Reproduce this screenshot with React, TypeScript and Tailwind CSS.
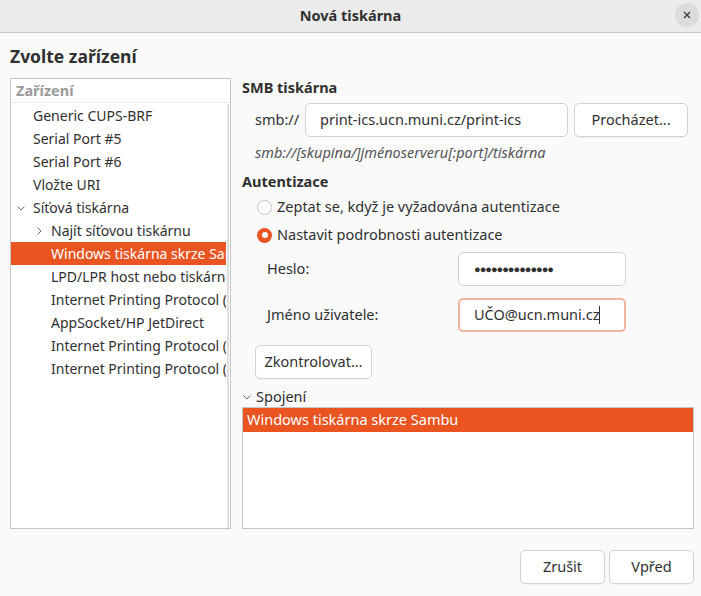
import React from "react";

const font = { fontFamily: '"Noto Sans", "Open Sans", sans-serif' };

const devices = [
  { label: "Generic CUPS-BRF", level: 1 },
  { label: "Serial Port #5", level: 1 },
  { label: "Serial Port #6", level: 1 },
  { label: "Vložte URI", level: 1 },
  { label: "Síťová tiskárna", level: 1, expander: "open" },
  { label: "Najít síťovou tiskárnu", level: 2, expander: "closed" },
  { label: "Windows tiskárna skrze Sambu", level: 2, selected: true },
  { label: "LPD/LPR host nebo tiskárna", level: 2 },
  { label: "Internet Printing Protocol (ipp)", level: 2 },
  { label: "AppSocket/HP JetDirect", level: 2 },
  { label: "Internet Printing Protocol (ipps)", level: 2 },
  { label: "Internet Printing Protocol (https)", level: 2 },
];

const Chevron = ({ open }: { open: boolean }) => (
  <svg width="10" height="10" viewBox="0 0 10 10" className="shrink-0">
    {open ? (
      <path d="M1.5 3.5 L5 7 L8.5 3.5" fill="none" stroke="#6b6b6b" strokeWidth="1" />
    ) : (
      <path d="M3.5 1.5 L7 5 L3.5 8.5" fill="none" stroke="#6b6b6b" strokeWidth="1" />
    )}
  </svg>
);

const Radio = ({ checked }: { checked: boolean }) =>
  checked ? (
    <span className="w-[15px] h-[15px] rounded-full bg-[#e95420] flex items-center justify-center shrink-0">
      <span className="w-[6px] h-[6px] rounded-full bg-white" />
    </span>
  ) : (
    <span className="w-[15px] h-[15px] rounded-full border border-[#c4c4c4] bg-white shrink-0" />
  );

const Button = ({ children, className = "" }: { children: React.ReactNode; className?: string }) => (
  <div
    className={`h-[34px] flex items-center justify-center rounded-[5px] border border-[#d2d2d2] bg-white text-[14.5px] text-[#303030] shadow-[0_1px_0_rgba(0,0,0,0.04)] ${className}`}
  >
    {children}
  </div>
);

export default function App() {
  return (
    <div style={font} className="w-[701px] h-[596px] bg-[#fafafa] text-[#303030] flex flex-col overflow-hidden">
      {/* header bar */}
      <div className="h-[33px] bg-[#ebebeb] border-b border-[#c6c6c6] flex items-center justify-center relative shrink-0">
        <span className="text-[14.5px] font-bold text-[#303030]">Nová tiskárna</span>
        <div className="absolute right-[2px] top-[3px] w-[24px] h-[24px] rounded-full bg-[#dcdcdc] flex items-center justify-center">
          <svg width="10" height="10" viewBox="0 0 10 10">
            <path d="M2 2 L8 8 M8 2 L2 8" stroke="#3a3a3a" strokeWidth="1.3" />
          </svg>
        </div>
      </div>

      <div className="pl-[10px] pr-[7px] flex flex-col flex-1">
        <div className="h-[45px] flex items-center pt-[1px] text-[17.5px] font-bold text-[#303030]">Zvolte zařízení</div>

        <div className="flex gap-[11px]">
          {/* device tree */}
          <div className="w-[221px] h-[451px] border border-[#c6c6c6] bg-white flex flex-col relative overflow-hidden">
            <div className="h-[24px] flex items-center pl-[5px] text-[14.5px] font-bold text-[#9a9a9a] border-b border-[#ececec]">
              Zařízení
            </div>
            <div className="flex flex-col pt-[1px] pr-[4px]">
              {devices.map((d, i) => (
                <div
                  key={i}
                  className={`h-[23px] flex items-center whitespace-nowrap overflow-hidden text-[14px] ${
                    d.selected ? "bg-[#e95420] text-white" : "text-[#303030]"
                  }`}
                >
                  <div
                    className={`shrink-0 flex items-center ${d.level === 1 ? "w-[22px] pl-[5px]" : "w-[40px] pl-[23px]"}`}
                  >
                    {d.expander && <Chevron open={d.expander === "open"} />}
                  </div>
                  <span className="shrink-0">{d.label}</span>
                </div>
              ))}
            </div>
            <div className="absolute right-[1px] top-[25px] bottom-0 w-[2px] bg-[#dedede]" />
          </div>

          {/* SMB settings */}
          <div className="flex-1 flex flex-col">
            <div className="h-[22px] flex items-center text-[14.5px] font-bold mt-[-1px]">SMB tiskárna</div>
            <div className="flex items-center mt-[4px] pl-[13px]">
              <span className="text-[14.5px] w-[50px]">smb://</span>
              <div className="w-[263px] h-[34px] rounded-[5px] border border-[#d2d2d2] bg-white flex items-center pl-[14px] text-[14.5px]">
                print-ics.ucn.muni.cz/print-ics
              </div>
              <Button className="w-[114px] ml-[6px]">Procházet...</Button>
            </div>
            <div className="h-[20px] mt-[6px] pl-[13px] flex items-center text-[14.5px] italic text-[#555]">
              smb://[skupina/]jménoserveru[:port]/tiskárna
            </div>
            <div className="h-[22px] mt-[8px] flex items-center text-[14.5px] font-bold">Autentizace</div>
            <div className="h-[24px] mt-[2px] pl-[15px] flex items-center gap-[5px] text-[14.5px]">
              <Radio checked={false} />
              Zeptat se, když je vyžadována autentizace
            </div>
            <div className="h-[24px] mt-[4px] pl-[15px] flex items-center gap-[5px] text-[14.5px]">
              <Radio checked />
              Nastavit podrobnosti autentizace
            </div>
            <div className="flex items-center mt-[5px] pl-[25px] text-[14.5px]">
              <span className="w-[191px]">Heslo:</span>
              <div className="w-[168px] h-[34px] rounded-[5px] border border-[#d2d2d2] bg-white flex items-center pl-[15px] text-[11px] tracking-[-1px]">
                ●●●●●●●●●●●●●●
              </div>
            </div>
            <div className="flex items-center mt-[12px] pl-[25px] text-[14.5px]">
              <span className="w-[191px]">Jméno uživatele:</span>
              <div className="w-[168px] h-[34px] rounded-[5px] border-2 border-[#f2b49e] bg-white flex items-center pl-[14px]">
                UČO@ucn.muni.cz
                <span className="w-[1px] h-[18px] bg-[#303030]" />
              </div>
            </div>
            <Button className="w-[117px] mt-[13px] ml-[13px]">Zkontrolovat...</Button>
            <div className="h-[20px] mt-[8px] flex items-center gap-[4px] text-[14.5px]">
              <Chevron open />
              Spojení
            </div>
            <div className="h-[122px] border border-[#c6c6c6] bg-white">
              <div className="h-[24px] bg-[#e95420] text-white text-[14.5px] flex items-center pl-[4px]">
                Windows tiskárna skrze Sambu
              </div>
            </div>
          </div>
        </div>

        <div className="flex justify-end gap-[4px] mt-[21px]">
          <Button className="w-[85px]">Zrušit</Button>
          <Button className="w-[85px]">Vpřed</Button>
        </div>
      </div>
    </div>
  );
}
